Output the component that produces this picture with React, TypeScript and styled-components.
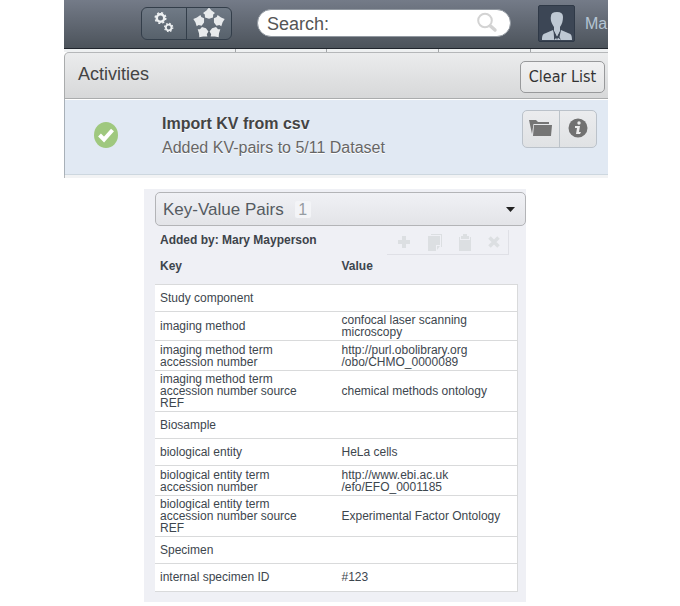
import React from "react";
import styled, { createGlobalStyle } from "styled-components";

const Global = createGlobalStyle`
  * { box-sizing: border-box; }
  body { margin: 0; background: #fff; font-family: "Liberation Sans", Arial, sans-serif; color: #3d434a; }
  button, input { font: inherit; color: inherit; }
  button { cursor: pointer; }
  svg { display: block; flex: none; }
`;

const Page = styled.main`
  display: flex;
  flex-direction: column;
  gap: 11px;
`;

const Activity = styled.section`
  margin: 0 72px 0 64px;
`;

const TopBar = styled.header`
  display: flex;
  align-items: center;
  height: 49px;
  padding: 0 0 2px 77px;
  background: linear-gradient(#747b88, #4c535b);
  border-bottom: 1px solid #20252d;
`;

const IconGroup = styled.div`
  flex: none;
  display: flex;
  width: 91px;
  height: 33px;
  border: 1px solid #333e4a;
  border-radius: 6px;
  background: linear-gradient(#707a86, #57616b);
  overflow: hidden;
`;

const BarButton = styled.button`
  flex: 1;
  display: flex;
  align-items: center;
  justify-content: center;
  padding: 0;
  border: 0;
  background: none;
  & + & { border-left: 1px solid #333e4a; }
`;

const SearchBox = styled.label`
  flex: 1;
  min-width: 0;
  display: flex;
  align-items: center;
  height: 28px;
  margin-left: 25px;
  padding: 0 12px 0 9px;
  border: 1px solid #9299a1;
  border-radius: 14px;
  background: #fff;
`;

const SearchInput = styled.input`
  flex: 1;
  min-width: 0;
  height: 26px;
  padding: 2px 0 0;
  border: 0;
  outline: 0;
  background: none;
  font-size: 18px;
  color: #555;
  &::placeholder { color: #555; opacity: 1; }
`;

const Avatar = styled.div`
  flex: none;
  width: 37px;
  height: 37px;
  margin-left: 27px;
  border: 1px solid #2f3947;
  border-radius: 2px;
  background: #3c4655;
`;

const UserName = styled.a`
  flex: none;
  width: 23px;
  padding-top: 2px;
  margin-left: 10px;
  white-space: nowrap;
  font-size: 16px;
  color: #b5c5d4;
  text-decoration: none;
`;

const TabStrip = styled.div`
  display: flex;
  height: 3px;
  padding-left: 171px;
  background: #eef0f1;
`;

const TabMark = styled.span<{ $width: number }>`
  width: ${(p) => p.$width}px;
  border-left: 1px solid #a3a6a8;
`;

const ActivityHead = styled.div`
  display: flex;
  align-items: center;
  justify-content: space-between;
  height: 47px;
  padding: 2px 3px 0 13px;
  border: 1px solid #aaacad;
  border-right: 0;
  border-top-color: #b5b7b9;
  border-radius: 5px 0 0 0;
  background: linear-gradient(#ebeced, #d7d8d9);
`;

const Heading = styled.h1`
  margin: 0;
  padding-bottom: 6px;
  font-size: 18px;
  line-height: 20px;
  font-weight: 400;
  color: #444;
`;

const ClearButton = styled.button`
  width: 85px;
  height: 32px;
  padding: 0;
  border: 1px solid #98999b;
  border-radius: 5px;
  background: linear-gradient(#f1f1f2, #e3e4e5);
  font-family: "DejaVu Sans Condensed", "Noto Sans", sans-serif;
  font-size: 16px;
  line-height: 20px;
  color: #333;
`;

const ActivityRow = styled.div`
  display: flex;
  height: 76px;
  border: solid #a8b0b8;
  border-width: 0 0 0 1px;
  background: #e1e9f3;
  box-shadow: inset 0 1px #fff, inset 0 -1px #cdd7df;
`;

const Status = styled.div`
  width: 97px;
  padding: 22px 0 0 28px;
`;

const Message = styled.div`
  flex: 1;
  padding-top: 13px;
  font-size: 16px;
  line-height: 24px;
  color: #666;
  text-shadow: 0 1px #fff;
`;

const Strong = styled.strong`
  display: block;
  color: #444;
`;

const Actions = styled.div`
  display: flex;
  width: 75px;
  height: 38px;
  margin: 11px 11px 0 0;
  border: 1px solid #bbc2ca;
  border-radius: 5px;
  background: linear-gradient(#ebecee, #e0e2e4);
  overflow: hidden;
`;

const ActionButton = styled.button`
  flex: 1;
  display: flex;
  align-items: center;
  justify-content: center;
  padding: 0 0 2px;
  border: 0;
  background: none;
  & + & { border-left: 1px solid #bcc3c9; }
`;

const PanelFoot = styled.div`
  height: 3px;
  border-left: 1px solid #b4b7ba;
  background: #f2f3f4;
`;

const Panel = styled.section`
  margin: 0 154px 0 144px;
  padding: 3px 0 10px 11px;
  background: #eff0f5;
`;

const PanelToggle = styled.button`
  display: flex;
  align-items: center;
  width: 100%;
  height: 34px;
  padding: 1px 10px 0 7px;
  border: 1px solid #b3b4b7;
  border-radius: 5px;
  background: linear-gradient(#f0f1f5, #e3e4e8);
  font-size: 17px;
  line-height: 20px;
  color: #555b61;
`;

const Count = styled.span`
  width: 16px;
  height: 17px;
  margin: 0 auto 0 11px;
  border-radius: 2px;
  background: #f3f4f7;
  font-size: 16px;
  line-height: 17px;
  color: #969ca3;
`;

const Tools = styled.div`
  display: flex;
  justify-content: space-between;
  height: 28px;
  padding: 0 17px 0 5px;
  font-size: 12px;
`;

const AddedBy = styled.strong`
  line-height: 28px;
`;

const ToolGroup = styled.div`
  display: flex;
  justify-content: space-around;
  width: 122px;
  height: 25px;
  padding-left: 3px;
  margin-top: 4px;
  border: solid #dfe0e6;
  border-width: 0 1px 1px 0;
`;

const ToolButton = styled.button`
  display: flex;
  align-items: center;
  padding: 0;
  border: 0;
  background: none;
  color: #dcdfe2;
`;

const Pairs = styled.table`
  width: calc(100% - 8px);
  table-layout: fixed;
  border-collapse: separate;
  border-spacing: 0;
  font-size: 12px;
  line-height: 12px;
  color: #3d464e;
`;

const HeadCell = styled.th`
  height: 31px;
  padding: 0 0 7px 5px;
  text-align: left;
  border-bottom: 1px solid #d9dadb;
`;

const Cell = styled.td`
  height: 27px;
  padding: 2px 30px 2px 5px;
  background: #fff;
  border-bottom: 1px solid #d9dadb;
  tr:last-child > & { height: 28px; padding-bottom: 3px; }
`;

const ValueCell = styled(Cell)`
  padding-right: 10px;
  border-right: 1px solid #d9dadb;
`;

const KeyCol = styled.col`
  width: 50%;
`;

const Link = styled.a`
  display: block;
  padding-top: 1px;
  white-space: pre-line;
  color: inherit;
  text-decoration: none;
`;

const GearsIcon = () => (
  <svg width="24" height="26" viewBox="0 0 24 26" fill="none" stroke="#edf0f2">
    <circle cx="8.5" cy="8" r="3.7" strokeWidth="2.4" />
    <circle cx="8.5" cy="8" r="5.3" strokeWidth="1.5" strokeDasharray="2.08 2.08" />
    <circle cx="16.7" cy="17.5" r="2.8" strokeWidth="1.8" />
    <circle cx="16.7" cy="17.5" r="4.1" strokeWidth="1.2" strokeDasharray="1.61 1.61" />
  </svg>
);

const FigureIcon = () => (
  <svg width="34" height="32" viewBox="-17 -16 34 32" fill="#e7eaec">
    {[0, 72, 144, 216, 288].map((a) => (
      <path key={a} transform={`rotate(${a} 0 1)`} d="M0-15.5 2.5-12.5 6-10 4.2-8.5 4-5.5 0-4.2-4-5.5-4.2-8.5-6-10-2.500-12.5Z" />
    ))}
  </svg>
);

const SearchIcon = () => (
  <svg width="22" height="22" viewBox="0 0 22 22" fill="none" stroke="#d3d3d3">
    <circle cx="9" cy="8.5" r="6.8" strokeWidth="2" />
    <path d="m14.5 14 4.5 4" strokeWidth="3.4" strokeLinecap="round" />
  </svg>
);

const PersonIcon = () => (
  <svg width="35" height="35" viewBox="0 0 35 35" fill="#bec8d3">
    <path d="M12 10Q12 6 18 6q6 0 6 5c0 4-1 7-3 10v4l-3 6-3-6v-4c-2-3-4-7-3-11Z" />
    <path d="M3 34c0-5 1-6 4-7l7-3 4 10Zm15 0 4-10 7 3c3 1 4 2 4 7Z" />
    <path d="m14.5 24 3.5 7 4-7-1.5 7 1.5 3-4-3-3 3v-3Z" fill="#3c4655" />
  </svg>
);

const CheckIcon = () => (
  <svg width="26" height="28" viewBox="0 0 26 28">
    <ellipse cx="13" cy="14" rx="12" ry="13" fill="#9fc87e" />
    <path d="m6.5 14 4.500 4.5 8.5-9.5" fill="none" stroke="#fff" strokeWidth="4" />
  </svg>
);

const FolderIcon = () => (
  <svg width="24" height="18" viewBox="0 0 24 18" fill="#757575">
    <path d="M0 1h7l2 2h11v2H4.5L3 15Z" />
    <path d="M5 6h18l-1 11H4Z" />
  </svg>
);

const InfoIcon = () => (
  <svg width="20" height="20" viewBox="0 0 20 20">
    <circle cx="10" cy="10" r="9.5" fill="#717171" />
    <circle cx="11" cy="5" r="1.7" fill="#ececec" />
    <path d="M7 8h5l-1 6h2l-1 2H8l1-6H7Z" fill="#ececec" />
  </svg>
);

const PlusIcon = () => (
  <svg width="12" height="12" fill="currentColor"><path d="M4 0h4v4h4v4H8v4H4V8H0V4h4Z" /></svg>
);

const CopyIcon = () => (
  <svg width="16" height="17" viewBox="0 0 16 17" fill="currentColor">
    <path d="M1 2h12v9H9v6H1Zm9 10h3l-3 4Z" /><path d="M4 0h11v13h-1V1H4Z" />
  </svg>
);

const PasteIcon = () => (
  <svg width="12" height="17" viewBox="0 0 12 17" fill="currentColor">
    <path d="M0 3h1v3h10V3h1v14H0Z" /><path d="M2 5V2h2V0h4v2h2v3Z" />
  </svg>
);

const CrossIcon = () => (
  <svg width="12" height="12" stroke="currentColor" strokeWidth="3.6"><path d="m1.5 1.5 9 9m0-9-9 9" /></svg>
);

const CaretIcon = () => (
  <svg width="9" height="5" fill="#222"><path d="M0 0h9L4.5 5Z" /></svg>
);

const rows: [string, string][] = [
  ["Study component", ""],
  ["imaging method", "confocal laser scanning microscopy"],
  ["imaging method term accession number", "http://purl.obolibrary.org\n/obo/CHMO_0000089"],
  ["imaging method term accession number source REF", "chemical methods ontology"],
  ["Biosample", ""],
  ["biological entity", "HeLa cells"],
  ["biological entity term accession number", "http://www.ebi.ac.uk\n/efo/EFO_0001185"],
  ["biological entity term accession number source REF", "Experimental Factor Ontology"],
  ["Specimen", ""],
  ["internal specimen ID", "#123"],
];

const Value = ({ text }: { text: string }) =>
  text.startsWith("http") ? <Link href={text.replace("\n", "")}>{text}</Link> : <>{text}</>;

export default function App() {
  return (
    <Page>
      <Global />
      <Activity>
        <TopBar>
          <IconGroup>
            <BarButton aria-label="Scripts"><GearsIcon /></BarButton>
            <BarButton aria-label="Figure"><FigureIcon /></BarButton>
          </IconGroup>
          <SearchBox>
            <SearchInput type="text" placeholder="Search:" aria-label="Search" />
            <SearchIcon />
          </SearchBox>
          <Avatar><PersonIcon /></Avatar>
          <UserName href="#user">Ma</UserName>
        </TopBar>
        <TabStrip>
          <TabMark $width={91} /><TabMark $width={112} /><TabMark $width={92} /><TabMark $width={1} />
        </TabStrip>
        <ActivityHead>
          <Heading>Activities</Heading>
          <ClearButton>Clear List</ClearButton>
        </ActivityHead>
        <ActivityRow>
          <Status><CheckIcon /></Status>
          <Message><Strong>Import KV from csv</Strong>Added KV-pairs to 5/11 Dataset</Message>
          <Actions>
            <ActionButton aria-label="Open"><FolderIcon /></ActionButton>
            <ActionButton aria-label="Information"><InfoIcon /></ActionButton>
          </Actions>
        </ActivityRow>
        <PanelFoot />
      </Activity>
      <Panel>
        <PanelToggle aria-expanded="true">Key-Value Pairs<Count>1</Count><CaretIcon /></PanelToggle>
        <Tools>
          <AddedBy>Added by: Mary Mayperson</AddedBy>
          <ToolGroup>
            <ToolButton aria-label="Add"><PlusIcon /></ToolButton>
            <ToolButton aria-label="Copy"><CopyIcon /></ToolButton>
            <ToolButton aria-label="Paste"><PasteIcon /></ToolButton>
            <ToolButton aria-label="Delete"><CrossIcon /></ToolButton>
          </ToolGroup>
        </Tools>
        <Pairs>
          <colgroup><KeyCol /><KeyCol /></colgroup>
          <thead><tr><HeadCell>Key</HeadCell><HeadCell>Value</HeadCell></tr></thead>
          <tbody>
            {rows.map(([key, value]) => (
              <tr key={key}><Cell>{key}</Cell><ValueCell><Value text={value} /></ValueCell></tr>
            ))}
          </tbody>
        </Pairs>
      </Panel>
    </Page>
  );
}
